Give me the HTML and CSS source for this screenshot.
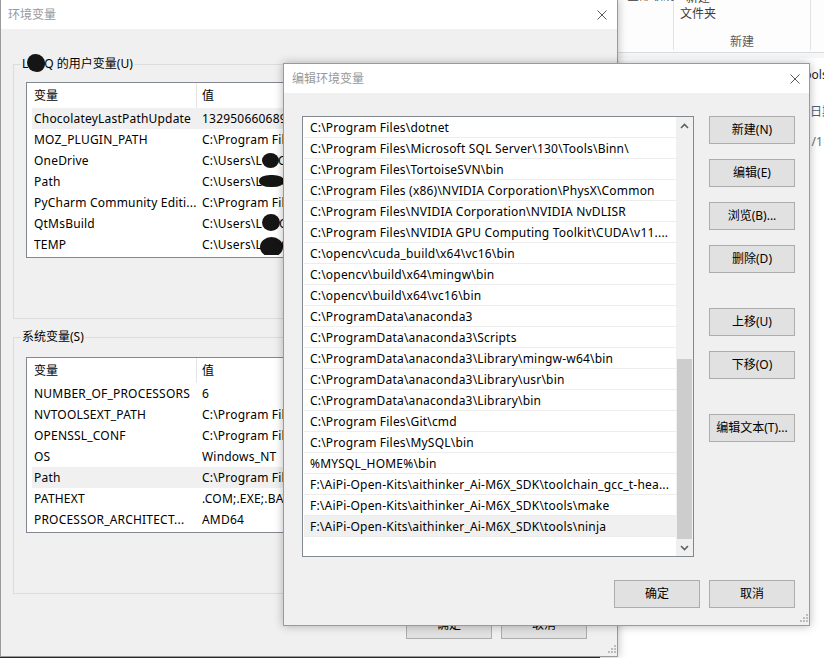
FILE: index.html
```html
<!DOCTYPE html>
<html lang="zh-CN">
<head>
<meta charset="utf-8">
<title>编辑环境变量</title>
<link rel="stylesheet" href="styles.css">
</head>
<body>
<div class="desk">

  <div class="explorer">
    <div class="ribbon">
      <div class="rgroup rg1"><div class="rtext">全部取消</div></div>
      <div class="rgroup rg2">
        <div class="rbtn"><div>新建</div><div>文件夹</div></div>
        <div class="rlabel">新建</div>
      </div>
      <div class="rgroup rg3"></div>
    </div>
    <div class="eband"></div>
    <div class="ebody">
      <div class="eline e1">tools</div>
      <div class="eline e2">修改日期</div>
      <div class="eline e3">2021/11/22 10:15</div>
    </div>
  </div>

  <div class="win envwin">
    <div class="titlebar tb-env">
      <span class="title">环境变量</span>
      <svg class="close" width="10" height="10" viewBox="0 0 10 10"><path d="M0.5 0.5L9.5 9.5M9.5 0.5L0.5 9.5" stroke="#5a5a5a" stroke-width="1" fill="none"/></svg>
    </div>
    <div class="envbody">
      <fieldset class="group g-user">
        <legend>L<span class="blob blob-t"></span>Q 的用户变量(U)</legend>
        <div class="vlist">
          <div class="vhead"><div class="c1">变量</div><div class="c2">值</div></div>
          <div class="vrow sel"><div class="c1">ChocolateyLastPathUpdate</div><div class="c2">132950660689580000</div></div>
          <div class="vrow"><div class="c1">MOZ_PLUGIN_PATH</div><div class="c2">C:\Program Files\Foxit Software\plugins\</div></div>
          <div class="vrow"><div class="c1">OneDrive</div><div class="c2">C:\Users\L<span class="blob b1"></span>OQ\OneDrive</div></div>
          <div class="vrow"><div class="c1">Path</div><div class="c2">C:\Users\L<span class="blob b2"></span>OQ\AppData\Local\Microsoft\WindowsApps;</div></div>
          <div class="vrow"><div class="c1">PyCharm Community Editi...</div><div class="c2">C:\Program Files\JetBrains\PyCharm Community Edition\bin;</div></div>
          <div class="vrow"><div class="c1">QtMsBuild</div><div class="c2">C:\Users\L<span class="blob b3"></span>OQ\AppData\Local\QtMsBuild</div></div>
          <div class="vrow"><div class="c1">TEMP</div><div class="c2">C:\Users\L<span class="blob b4"></span>OQ\AppData\Local\Temp</div></div>
        </div>
        <div class="gbtns">
          <button class="btn">新建(N)...</button>
          <button class="btn">编辑(E)...</button>
          <button class="btn">删除(D)</button>
        </div>
      </fieldset>

      <fieldset class="group g-sys">
        <legend>系统变量(S)</legend>
        <div class="vlist">
          <div class="vhead"><div class="c1">变量</div><div class="c2">值</div></div>
          <div class="vrow"><div class="c1">NUMBER_OF_PROCESSORS</div><div class="c2">6</div></div>
          <div class="vrow"><div class="c1">NVTOOLSEXT_PATH</div><div class="c2">C:\Program Files\NVIDIA Corporation\NvToolsExt\</div></div>
          <div class="vrow"><div class="c1">OPENSSL_CONF</div><div class="c2">C:\Program Files\OpenSSL-Win64\bin\openssl.cfg</div></div>
          <div class="vrow"><div class="c1">OS</div><div class="c2">Windows_NT</div></div>
          <div class="vrow sel"><div class="c1">Path</div><div class="c2">C:\Program Files\dotnet\;C:\Program Files\Git\cmd</div></div>
          <div class="vrow"><div class="c1">PATHEXT</div><div class="c2">.COM;.EXE;.BAT;.CMD;.VBS;.VBE;.JS;.JSE;.WSF;.WSH;.MSC</div></div>
          <div class="vrow"><div class="c1">PROCESSOR_ARCHITECT...</div><div class="c2">AMD64</div></div>
        </div>
        <div class="gbtns">
          <button class="btn">新建(W)...</button>
          <button class="btn">编辑(I)...</button>
          <button class="btn">删除(L)</button>
        </div>
      </fieldset>

      <div class="footer env-footer">
        <button class="btn">确定</button>
        <button class="btn">取消</button>
      </div>
    </div>
    <svg class="grip" width="8" height="8" viewBox="0 0 8 8" fill="#bdbdbd"><rect x="6" y="0" width="2" height="2"/><rect x="3" y="3" width="2" height="2"/><rect x="6" y="3" width="2" height="2"/><rect x="0" y="6" width="2" height="2"/><rect x="3" y="6" width="2" height="2"/><rect x="6" y="6" width="2" height="2"/></svg>
  </div>

  <div class="win editdlg">
    <div class="titlebar tb-edit">
      <span class="title">编辑环境变量</span>
      <svg class="close" width="10" height="10" viewBox="0 0 10 10"><path d="M0.5 0.5L9.5 9.5M9.5 0.5L0.5 9.5" stroke="#5a5a5a" stroke-width="1" fill="none"/></svg>
    </div>
    <div class="editbody">
      <div class="editmain">
        <div class="plist">
          <div class="prows">
            <div class="prow">C:\Program Files\dotnet</div>
            <div class="prow">C:\Program Files\Microsoft SQL Server\130\Tools\Binn\</div>
            <div class="prow">C:\Program Files\TortoiseSVN\bin</div>
            <div class="prow">C:\Program Files (x86)\NVIDIA Corporation\PhysX\Common</div>
            <div class="prow">C:\Program Files\NVIDIA Corporation\NVIDIA NvDLISR</div>
            <div class="prow">C:\Program Files\NVIDIA GPU Computing Toolkit\CUDA\v11....</div>
            <div class="prow">C:\opencv\cuda_build\x64\vc16\bin</div>
            <div class="prow">C:\opencv\build\x64\mingw\bin</div>
            <div class="prow">C:\opencv\build\x64\vc16\bin</div>
            <div class="prow">C:\ProgramData\anaconda3</div>
            <div class="prow">C:\ProgramData\anaconda3\Scripts</div>
            <div class="prow">C:\ProgramData\anaconda3\Library\mingw-w64\bin</div>
            <div class="prow">C:\ProgramData\anaconda3\Library\usr\bin</div>
            <div class="prow">C:\ProgramData\anaconda3\Library\bin</div>
            <div class="prow">C:\Program Files\Git\cmd</div>
            <div class="prow">C:\Program Files\MySQL\bin</div>
            <div class="prow">%MYSQL_HOME%\bin</div>
            <div class="prow">F:\AiPi-Open-Kits\aithinker_Ai-M6X_SDK\toolchain_gcc_t-hea...</div>
            <div class="prow">F:\AiPi-Open-Kits\aithinker_Ai-M6X_SDK\tools\make</div>
            <div class="prow sel">F:\AiPi-Open-Kits\aithinker_Ai-M6X_SDK\tools\ninja</div>
          </div>
          <div class="vscroll">
            <div class="sbtn"><svg width="9" height="6" viewBox="0 0 9 6"><path d="M1 5L4.5 1.5L8 5" fill="none" stroke="#606060" stroke-width="1.6"/></svg></div>
            <div class="strack"><div class="sthumb"></div></div>
            <div class="sbtn"><svg width="9" height="6" viewBox="0 0 9 6"><path d="M1 1L4.5 4.5L8 1" fill="none" stroke="#606060" stroke-width="1.6"/></svg></div>
          </div>
        </div>
        <div class="sidebtns">
          <button class="btn">新建(N)</button>
          <button class="btn">编辑(E)</button>
          <button class="btn">浏览(B)...</button>
          <button class="btn">删除(D)</button>
          <button class="btn sep">上移(U)</button>
          <button class="btn">下移(O)</button>
          <button class="btn sep">编辑文本(T)...</button>
        </div>
      </div>
      <div class="footer edit-footer">
        <button class="btn">确定</button>
        <button class="btn">取消</button>
      </div>
    </div>
    <svg class="grip" width="8" height="8" viewBox="0 0 8 8" fill="#bdbdbd"><rect x="6" y="0" width="2" height="2"/><rect x="3" y="3" width="2" height="2"/><rect x="6" y="3" width="2" height="2"/><rect x="0" y="6" width="2" height="2"/><rect x="3" y="6" width="2" height="2"/><rect x="6" y="6" width="2" height="2"/></svg>
  </div>

</div>
</body>
</html>
```

FILE: styles.css
```css
* { box-sizing: border-box; }
html, body { margin: 0; padding: 0; }
body {
  width: 824px;
  height: 658px;
  overflow: hidden;
  font-family: "Noto Sans", "Noto Sans CJK SC", sans-serif;
  font-size: 12px;
  color: #000;
}
.desk {
  position: relative;
  width: 824px;
  height: 658px;
  background: #2d2d2d;
  overflow: hidden;
}

/* ---------- explorer window behind ---------- */
.explorer {
  position: absolute;
  left: 600px;
  top: -10px;
  width: 300px;
  height: 680px;
  background: #fff;
}
.ribbon {
  display: flex;
  height: 63px;
  background: #fdfdfd;
  border-bottom: 1px solid #dadbdc;
  padding-bottom: 2px;
}
.rgroup { height: 60px; border-right: 1px solid #e2e3e4; }
.rg1 { width: 74px; padding-left: 27px; }
.rtext { line-height: 16px; margin-top: -2px; color: #3c3c3c; white-space: nowrap; }
.rg2 {
  width: 137px;
  display: flex;
  flex-direction: column;
  justify-content: space-between;
  padding-left: 6px;
}
.rbtn { width: 36px; line-height: 16px; text-align: center; color: #3c3c3c; white-space: nowrap; }
.rlabel { line-height: 16px; text-align: center; color: #5a5a5a; padding-right: 6px; }
.rg3 { border-right: none; flex: 1; }
.eband { height: 5px; background: #f5f6f7; }
.ebody { padding-top: 9px; line-height: 16px; white-space: nowrap; }
.e1 { margin-left: 200px; color: #1e1e1e; }
.e2 { margin-left: 186px; margin-top: 21px; color: #4c607a; }
.e3 { margin-left: 184px; margin-top: 14px; color: #6d6d6d; }

/* ---------- generic window ---------- */
.win {
  position: absolute;
  background: #f0f0f0;
  border: 1px solid #9a9a9a;
  box-shadow: 0 0 9px rgba(0, 0, 0, 0.28);
}
.titlebar {
  display: flex;
  align-items: center;
  justify-content: space-between;
  height: 29px;
  background: #fff;
}
.title { color: #999; line-height: 16px; }
.close { display: block; }
.grip { position: absolute; right: 1px; bottom: 3px; }

.btn {
  display: block;
  width: 86px;
  height: 28px;
  margin: 0;
  padding: 0;
  background: #e1e1e1;
  border: 1px solid #adadad;
  border-radius: 0;
  font: inherit;
  color: #000;
  line-height: 26px;
  text-align: center;
  white-space: nowrap;
}
.footer { display: flex; justify-content: flex-end; gap: 9px; }

/* ---------- 环境变量 window ---------- */
.envwin { left: 0; top: -1px; width: 618px; height: 658px; }
.tb-env { padding: 0 10px 0 7px; }
.envbody { padding: 0 12px; }
.group {
  margin: 0;
  min-width: 0;
  border: 1px solid #dcdcdc;
  padding: 0 12px 22px 12px;
}
.group legend {
  margin-left: -5px;
  padding: 0 1px;
  line-height: 16px;
  white-space: nowrap;
}
.g-user { margin-top: 27px; padding-top: 10px; }
.g-sys { margin-top: 10px; padding-top: 12px; }
.vlist {
  height: 176px;
  background: #fff;
  border: 1px solid #828790;
  overflow: hidden;
}
.vhead, .vrow {
  display: grid;
  grid-template-columns: 165px 1fr;
  margin-left: 5px;
  white-space: nowrap;
}
.vhead { height: 25px; line-height: 25px; }
.vhead .c1 { border-right: 1px solid #e5e5e5; }
.vrow { height: 21px; line-height: 21px; letter-spacing: 0.2px; }
.vrow.sel { background: #f0f0f0; }
.c1 { padding-left: 2px; overflow: hidden; }
.c2 { padding-left: 5px; overflow: hidden; }
.gbtns { display: flex; justify-content: flex-end; gap: 9px; margin-top: 10px; }
.env-footer { margin-top: 17px; padding-right: 18px; }

.blob {
  display: inline-block;
  background: #151515;
  border-radius: 50%;
  vertical-align: middle;
}
.blob-t { width: 18px; height: 18px; margin: -4px -1px 0 -1px; border-radius: 48% 52% 45% 55%; }
.b1 { width: 17px; height: 15px; margin: -3px -1px 0 0; }
.b2 { width: 25px; height: 12px; margin: -3px -3px 0 -3px; border-radius: 45%; }
.b3 { width: 18px; height: 17px; margin: -4px -1px 0 0; }
.b4 { width: 23px; height: 20px; margin: -1px -2px -4px -2px; }

/* ---------- 编辑环境变量 dialog ---------- */
.editdlg { left: 283px; top: 63px; width: 527px; height: 563px; }
.tb-edit { padding: 0 9px 0 8px; }
.editbody { padding: 23px 14px 0 18px; }
.editmain { display: flex; gap: 15px; align-items: flex-start; }
.plist {
  display: flex;
  width: 392px;
  height: 441px;
  background: #fff;
  border: 1px solid #828790;
}
.prows { flex: 1; min-width: 0; }
.prow {
  height: 21px;
  margin-left: 1px;
  padding-left: 6px;
  border-bottom: 1px solid #ededed;
  line-height: 21px;
  letter-spacing: 0.2px;
  white-space: nowrap;
  overflow: hidden;
}
.prow.sel { background: #f0f0f0; }
.vscroll {
  display: flex;
  flex-direction: column;
  width: 17px;
  background: #f0f0f0;
}
.sbtn {
  display: flex;
  align-items: center;
  justify-content: center;
  height: 17px;
}
.sbtn svg { display: block; }
.strack { flex: 1; display: flex; flex-direction: column; justify-content: flex-end; }
.sthumb { height: 180px; margin: 0 1px; background: #cdcdcd; }
.sidebtns { display: flex; flex-direction: column; gap: 15px; }
.sidebtns .sep { margin-top: 20px; }
.edit-footer { margin-top: 23px; }
```
